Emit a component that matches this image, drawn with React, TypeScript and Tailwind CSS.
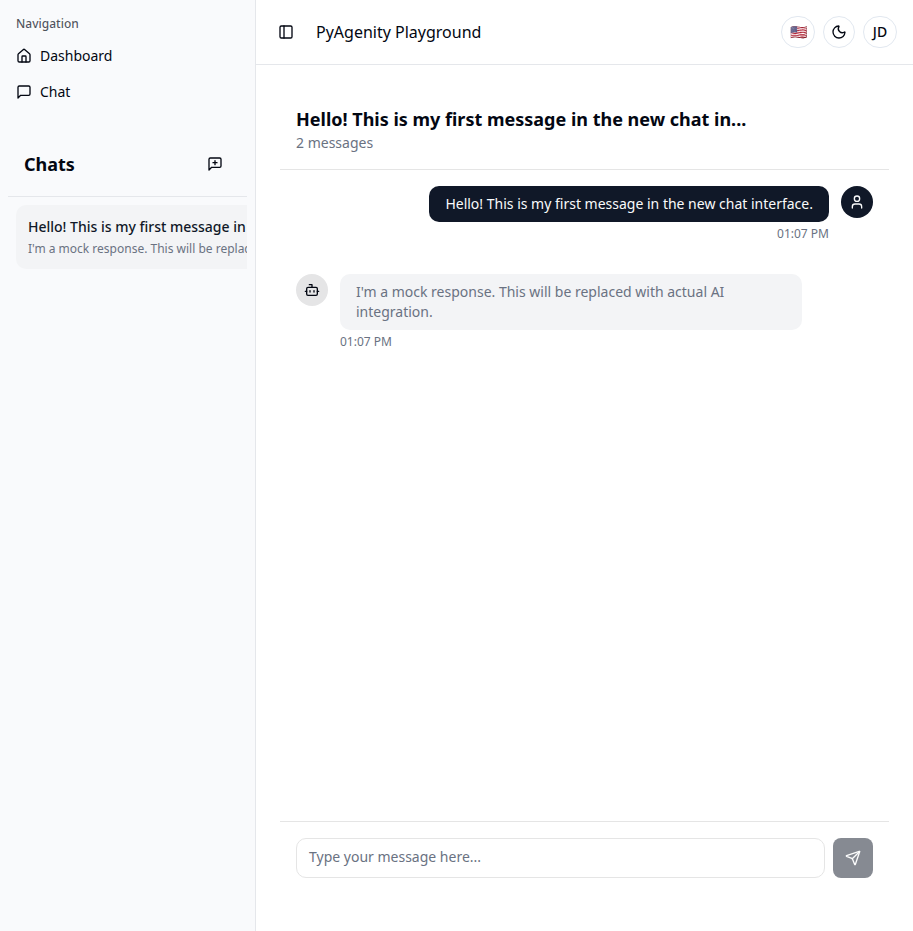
import type { ReactNode } from "react"
import { Bot, House, Moon, PanelLeft, Send, User } from "lucide-react"

function SquareBubble({ plus = false }: { plus?: boolean }) {
  return (
    <svg
      className="size-4 shrink-0"
      viewBox="0 0 24 24"
      fill="none"
      stroke="currentColor"
      strokeWidth="2"
      strokeLinecap="round"
      strokeLinejoin="round"
    >
      <path d="M21 15a2 2 0 0 1-2 2H7l-4 4V5a2 2 0 0 1 2-2h14a2 2 0 0 1 2 2z" />
      {plus && <path d="M12 7v6M9 10h6" />}
    </svg>
  )
}

function NavItem({ icon, label }: { icon: ReactNode; label: string }) {
  return (
    <a className="flex h-8 items-center gap-2 px-2 text-sm text-gray-950">
      {icon}
      {label}
    </a>
  )
}

function Sidebar() {
  return (
    <aside className="flex w-64 shrink-0 flex-col border-r border-gray-200 bg-[#f9fafc] px-2 pt-2">
      <div className="flex h-8 items-center px-2 text-xs font-medium text-gray-950/70">
        Navigation
      </div>
      <nav className="flex flex-col gap-1">
        <NavItem icon={<House className="size-4" />} label="Dashboard" />
        <NavItem icon={<SquareBubble />} label="Chat" />
      </nav>
      <section className="mt-6 overflow-hidden">
        <div className="flex h-[65px] items-center justify-between border-b border-gray-200 px-4">
          <h2 className="text-lg font-bold text-gray-950">Chats</h2>
          <button className="flex size-8 items-center justify-center text-gray-950">
            <SquareBubble plus />
          </button>
        </div>
        <div className="p-2">
          <div className="h-16 w-80 rounded-[10px] bg-gray-100 p-3 whitespace-nowrap">
            <div className="text-sm font-medium text-gray-900">
              Hello! This is my first message in the new chat in...
            </div>
            <div className="mt-1 text-xs text-gray-500">
              I'm a mock response. This will be replaced with actual AI
            </div>
          </div>
        </div>
      </section>
    </aside>
  )
}

function TopBar() {
  return (
    <header className="flex h-[65px] shrink-0 items-center border-b border-gray-200 px-4">
      <button className="flex size-7 items-center justify-center text-gray-950">
        <PanelLeft className="size-4" />
      </button>
      <h1 className="ml-4 text-base text-gray-950">PyAgenity Playground</h1>
      <div className="ml-auto flex items-center gap-2 text-sm font-medium text-gray-950">
        <button className="flex h-8 w-[34px] items-center justify-center rounded-full border border-slate-200">
          🇺🇸
        </button>
        <button className="flex size-8 items-center justify-center rounded-full border border-slate-200">
          <Moon className="size-4" />
        </button>
        <button className="flex h-8 w-[34px] items-center justify-center rounded-full border border-slate-200">
          JD
        </button>
      </div>
    </header>
  )
}

function Messages() {
  return (
    <div className="flex flex-1 flex-col gap-8 p-4">
      <div className="flex justify-end gap-3">
        <div className="flex max-w-[80%] flex-col items-end">
          <div className="rounded-[10px] bg-gray-900 px-4 py-2 text-sm text-gray-50">
            Hello! This is my first message in the new chat interface.
          </div>
          <time className="mt-1 text-xs text-gray-500">01:07 PM</time>
        </div>
        <div className="flex size-8 items-center justify-center rounded-full bg-gray-900 text-gray-50">
          <User className="size-4" />
        </div>
      </div>
      <div className="flex gap-3">
        <div className="flex size-8 shrink-0 items-center justify-center rounded-full bg-[#e5e5e6] text-gray-950">
          <Bot className="size-4" />
        </div>
        <div className="flex w-[80%] flex-col items-start">
          <div className="rounded-[10px] bg-gray-100 px-4 py-2 text-sm text-gray-500">
            I'm a mock response. This will be replaced with actual AI integration.
          </div>
          <time className="mt-1 text-xs text-gray-500">01:07 PM</time>
        </div>
      </div>
    </div>
  )
}

export default function App() {
  return (
    <div className="flex h-screen overflow-hidden bg-white font-['Noto_Sans',sans-serif]">
      <Sidebar />
      <div className="flex min-w-0 flex-1 flex-col">
        <TopBar />
        <main className="flex flex-1 flex-col px-6 pt-6 pb-[37px]">
          <div className="border-b border-neutral-200 p-4">
            <h2 className="text-lg font-bold text-gray-950">
              Hello! This is my first message in the new chat in...
            </h2>
            <p className="text-sm text-gray-500">2 messages</p>
          </div>
          <Messages />
          <form className="flex gap-2 border-t border-neutral-200 p-4">
            <textarea
              className="block h-10 flex-1 resize-none overflow-hidden rounded-[10px] border border-neutral-200 px-3 py-2 text-sm placeholder:text-gray-500"
              placeholder="Type your message here..."
            />
            <button
              type="button"
              className="flex size-10 items-center justify-center rounded-lg bg-gray-900 text-gray-50 opacity-50"
            >
              <Send className="size-4" />
            </button>
          </form>
        </main>
      </div>
    </div>
  )
}
